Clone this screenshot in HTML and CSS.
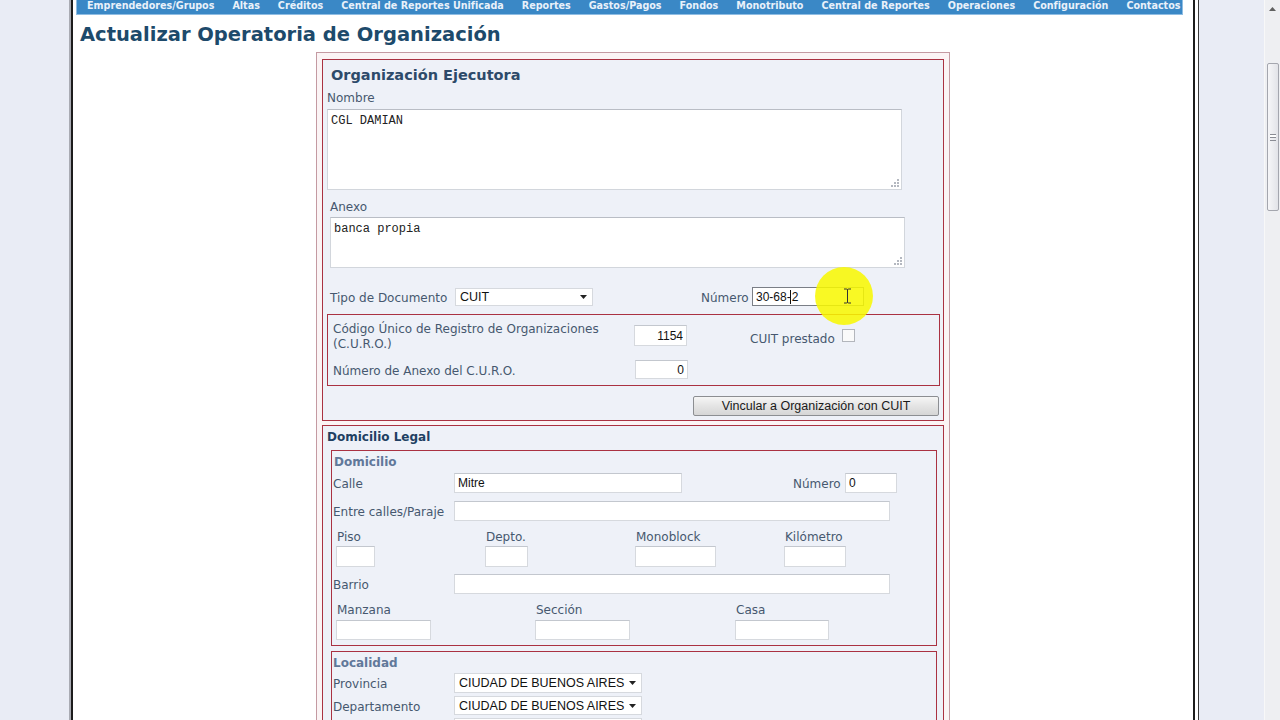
FILE: index.html
```html
<!DOCTYPE html>
<html lang="es">
<head>
<meta charset="utf-8">
<title>Actualizar Operatoria de Organización</title>
<link rel="stylesheet" href="styles.css">
</head>
<body>
<div class="screen">
  <div class="gutter-left"></div>
  <div class="main">
    <nav class="menu">
      <a>Emprendedores/Grupos</a>
      <a>Altas</a>
      <a>Créditos</a>
      <a>Central de Reportes Unificada</a>
      <a>Reportes</a>
      <a>Gastos/Pagos</a>
      <a>Fondos</a>
      <a>Monotributo</a>
      <a>Central de Reportes</a>
      <a>Operaciones</a>
      <a>Configuración</a>
      <a>Contactos</a>
    </nav>
    <h1 class="title">Actualizar Operatoria de Organización</h1>
    <div class="form-outer">
      <section class="box box-org">
        <h2 class="box-title">Organización Ejecutora</h2>
        <div class="lbl lbl-nombre">Nombre</div>
        <textarea class="ta ta-nombre">CGL DAMIAN</textarea>
        <div class="lbl lbl-anexo">Anexo</div>
        <textarea class="ta ta-anexo">banca propia</textarea>
        <div class="row row-doc">
          <span class="lbl w-doc">Tipo de Documento</span>
          <div class="select sel-doc"><span>CUIT</span><svg class="arrow" width="7" height="4" viewBox="0 0 7 4"><path d="M0 0H7L3.5 4Z" fill="#222"/></svg></div>
          <span class="lbl lbl-num">Número</span>
          <div class="input in-cuit">30-68-<span class="caret"></span>2<span class="highlight"></span><svg class="ibeam" width="9" height="16" viewBox="0 0 9 16"><path d="M1 1H3.5Q4.5 1 4.5 2V14Q4.5 15 3.5 15H1M8 1H5.5Q4.5 1 4.5 2M4.5 14Q4.5 15 5.5 15H8" fill="none" stroke="#333" stroke-width="1"/></svg></div>
        </div>
        <div class="box box-curo">
          <div class="row curo-1">
            <span class="lbl curo-lbl">Código Único de Registro de Organizaciones (C.U.R.O.)</span>
            <input class="input in-curo" value="1154">
            <span class="lbl lbl-prestado">CUIT prestado</span>
            <span class="check"></span>
          </div>
          <div class="row curo-2">
            <span class="lbl curo-lbl curo-lbl2">Número de Anexo del C.U.R.O.</span>
            <input class="input in-curo in-curo2" value="0">
          </div>
        </div>
        <div class="btn-row"><button class="btn">Vincular a Organización con CUIT</button></div>
      </section>

      <section class="box box-dom">
        <h3 class="dom-title">Domicilio Legal</h3>
        <div class="box sub-box box-domicilio">
          <h4 class="sub-title">Domicilio</h4>
          <div class="row frow r-calle">
            <span class="lbl flbl">Calle</span>
            <input class="input in-calle" value="Mitre">
            <span class="lbl lbl-numcalle">Número</span>
            <input class="input in-numcalle" value="0">
          </div>
          <div class="row frow r-entre">
            <span class="lbl flbl">Entre calles/Paraje</span>
            <input class="input in-wide">
          </div>
          <div class="grid4">
            <span class="lbl glbl">Piso</span>
            <span class="lbl glbl">Depto.</span>
            <span class="lbl glbl">Monoblock</span>
            <span class="lbl glbl">Kilómetro</span>
            <input class="input gin w-piso">
            <input class="input gin w-depto">
            <input class="input gin w-mono">
            <input class="input gin w-km">
          </div>
          <div class="row frow r-barrio">
            <span class="lbl flbl">Barrio</span>
            <input class="input in-wide">
          </div>
          <div class="grid3">
            <span class="lbl glbl">Manzana</span>
            <span class="lbl glbl">Sección</span>
            <span class="lbl glbl">Casa</span>
            <input class="input gin2 w-manz">
            <input class="input gin2 w-manz">
            <input class="input gin2 w-casa">
          </div>
        </div>
        <div class="box sub-box box-localidad">
          <h4 class="sub-title">Localidad</h4>
          <div class="row lrow r-prov">
            <span class="lbl flbl">Provincia</span>
            <div class="select sel-loc"><span>CIUDAD DE BUENOS AIRES</span><svg class="arrow" width="7" height="4" viewBox="0 0 7 4"><path d="M0 0H7L3.5 4Z" fill="#222"/></svg></div>
          </div>
          <div class="row lrow r-depto">
            <span class="lbl flbl">Departamento</span>
            <div class="select sel-loc sel-loc2"><span>CIUDAD DE BUENOS AIRES</span><svg class="arrow" width="7" height="4" viewBox="0 0 7 4"><path d="M0 0H7L3.5 4Z" fill="#222"/></svg></div>
          </div>
          <div class="row lrow r-loc">
            <span class="lbl flbl"></span>
            <div class="select sel-loc"></div>
          </div>
        </div>
      </section>
    </div>
  </div>
  <div class="gutter-right"></div>
  <div class="scrollbar">
    <div class="sb-up"><svg width="7" height="4" viewBox="0 0 7 4"><path d="M0 4H7L3.5 0Z" fill="#606060"/></svg></div>
    <div class="sb-gap"></div>
    <div class="sb-thumb"><span class="grip"></span></div>
    <div class="sb-track"></div>
  </div>
</div>
</body>
</html>
```

FILE: styles.css
```css
* { box-sizing: border-box; }
html, body { margin: 0; height: 720px; overflow: hidden; }
body {
  font-family: "DejaVu Sans", Verdana, sans-serif;
  font-size: 12px;
  color: #46586f;
  background: #e9ecf5;
}
.screen { display: flex; height: 720px; }
.gutter-left { width: 71px; flex: none; border-right: 2px solid #a9abb3; }
.main {
  width: 1124px; flex: none; height: 720px; overflow: hidden;
  background: #fff;
  border-left: 2px solid #1c1c1c;
  border-right: 2px solid #1c1c1c;
}
.gutter-right { flex: 1; border-left: 1px solid #fff; box-shadow: inset 2px 0 0 #fff, inset 3px 0 0 #3a3a3a; background: #e9ecf5; }
.scrollbar {
  width: 16px; flex: none; display: flex; flex-direction: column;
  background: #eeeff2; border-left: 1px solid #f8f8f8;
}
.sb-up { height: 17px; display: flex; align-items: center; justify-content: center; }
.sb-gap { height: 46px; }
.sb-thumb {
  height: 148px; margin: 0 1px 0 2px;
  border: 1px solid #a4a6ae; border-radius: 2px;
  background: linear-gradient(90deg, #f6f6f8, #e2e3e8);
  display: flex; align-items: center; justify-content: center;
}
.grip { width: 6px; height: 7px; border-top: 1px solid #8a8c94; border-bottom: 1px solid #8a8c94; box-shadow: inset 0 2px 0 #fff, inset 0 3px 0 #8a8c94; }
.sb-track { flex: 1; }

/* menu */
.menu {
  margin-left: 3px; width: 1107px; height: 15px;
  background: #3a88c6;
  border: 1px solid #8fbde3; border-top: 0;
  display: flex; gap: 18px; padding-left: 10px;
  font-family: "DejaVu Sans", Verdana, sans-serif;
  font-weight: bold; font-size: 9.6px; line-height: 11px;
  color: #e9f1fa;
  white-space: nowrap;
}
.menu a { display: block; }

.title {
  margin: 8px 0 0 7px;
  font-size: 19.5px; line-height: 24px; font-weight: bold;
  color: #1d4a6b;
}

.form-outer {
  width: 634px; margin: 5px auto 0;
  border: 1px solid #c49aa2;
  background: #fbf4f5;
  padding: 6px 5px 0;
}
.box {
  border: 1px solid #aa3242;
  background: #eef1f8;
}
.box-org { padding: 0 0 4px; margin-bottom: 4px; }
.box-title {
  margin: 6px 0 0 8px;
  font-size: 14.5px; line-height: 18px; font-weight: bold;
  color: #2d4a6a;
}
.lbl { line-height: 14px; white-space: nowrap; }
.lbl-nombre { margin: 7px 0 0 4px; }
.ta {
  display: block; resize: none;
  font-family: "Liberation Mono", "Courier New", monospace;
  font-size: 12px; line-height: 14px; color: #222;
  border: 1px solid #d2d6dc; border-top-color: #b9bdc5;
  padding: 4px 3px 3px; margin: 0;
  width: 575px;
  background-color: #fff;
  background-image:
    radial-gradient(circle, #b4b8c0 0.9px, transparent 1.1px),
    radial-gradient(circle, #b4b8c0 0.9px, transparent 1.1px),
    radial-gradient(circle, #b4b8c0 0.9px, transparent 1.1px),
    radial-gradient(circle, #b4b8c0 0.9px, transparent 1.1px),
    radial-gradient(circle, #b4b8c0 0.9px, transparent 1.1px),
    radial-gradient(circle, #b4b8c0 0.9px, transparent 1.1px);
  background-size: 2px 2px;
  background-repeat: no-repeat;
  background-position:
    right 2px bottom 2px, right 5px bottom 2px, right 8px bottom 2px,
    right 2px bottom 5px, right 5px bottom 5px, right 2px bottom 8px;
}
.ta-nombre { margin: 4px 0 0 4px; height: 81px; }
.lbl-anexo { margin: 10px 0 0 7px; }
.ta-anexo { margin: 3px 0 0 7px; height: 51px; }

.row { display: flex; align-items: center; }
.row > .lbl { padding-top: 2px; }
.row-doc { margin: 19px 0 0 7px; height: 19px; }
.w-doc { width: 125px; }
.select {
  display: flex; align-items: center; justify-content: space-between;
  background: #fff; border: 1px solid #d6d9de;
  font-family: "Liberation Sans", Arial, sans-serif; font-size: 12.5px; color: #111;
  padding: 0 5px 0 4px;
}
.sel-doc { width: 138px; height: 18px; margin-top: 1px; padding-right: 5px; }
.lbl-num { margin-left: 108px; width: 51px; }
.input {
  font-family: "Liberation Sans", Arial, sans-serif; font-size: 12px; color: #111;
  background: #fff;
  border: 1px solid #d6d9de; border-top-color: #c3c7ce;
  padding: 0 3px; margin: 0; outline: none;
}
.in-cuit {
  position: relative; width: 112px; height: 19px;
  display: flex; align-items: center;
  border-color: #7a7e86;
}
.caret { display: inline-block; width: 1px; height: 14px; background: #111; margin: 0 1px 0 -1px; }
.highlight {
  position: absolute; left: 62px; top: -21px;
  width: 58px; height: 58px; border-radius: 50%;
  background: rgba(248, 248, 0, 0.86);
  z-index: 2;
}
.ibeam { position: absolute; left: 90px; top: 0; z-index: 3; }

.box-curo { margin: 8px 0 0 4px; width: 613px; height: 72px; padding: 0 0 0 5px; }
.curo-1 { margin-top: 7px; align-items: flex-start; }
.curo-lbl { width: 301px; white-space: normal; line-height: 15px; }
.row > .curo-lbl { padding-top: 0; }
.curo-2 { margin-top: 8px; align-items: flex-start; }
.row > .curo-lbl2 { margin-top: 4px; }
.in-curo { width: 53px; height: 21px; text-align: right; margin-top: 3px; }
.in-curo2 { height: 19px; margin: 0 0 0 1px; }
.row > .lbl-prestado { margin: 8px 0 0 63px; }
.check {
  width: 13px; height: 13px; margin: 7px 0 0 7px;
  border: 1px solid #b3b6bc; background: #fafafa;
}
.btn-row { display: flex; justify-content: flex-end; margin: 10px 4px 0 0; }
.btn {
  width: 246px; height: 20px; padding: 0;
  font-family: "Liberation Sans", Arial, sans-serif; font-size: 12.5px; color: #1a1a1a;
  border: 1px solid #8c8e92; border-radius: 2px;
  background: linear-gradient(#f6f6f6, #e4e4e4 50%, #d6d6d6);
}

.dom-title {
  margin: 4px 0 0 4px;
  font-size: 12px; line-height: 14px; font-weight: bold;
  color: #213f62;
}
.sub-box { width: 606px; margin-left: 8px; }
.box-domicilio { margin-top: 6px; padding-bottom: 5px; }
.sub-title {
  margin: 4px 0 0 2px;
  font-size: 12px; line-height: 14px; font-weight: bold;
  color: #61789a;
}
.frow { margin-left: 1px; }
.flbl { width: 121px; }
.r-calle { margin-top: 4px; }
.in-calle { width: 228px; height: 20px; }
.lbl-numcalle { margin-left: 111px; width: 52px; }
.in-numcalle { width: 52px; height: 20px; }
.r-entre { margin-top: 8px; }
.in-wide { width: 436px; height: 20px; }
.grid4 {
  display: grid; grid-template-columns: 149px 150px 149px 1fr;
  row-gap: 2px; margin: 8px 0 0 4px; align-items: start;
}
.glbl { padding-top: 1px; padding-left: 1px; }
.gin { height: 21px; }
.w-piso { width: 39px; }
.w-depto { width: 43px; }
.w-mono { width: 81px; }
.w-km { width: 62px; }
.r-barrio { margin-top: 7px; }
.grid3 {
  display: grid; grid-template-columns: 199px 200px 1fr;
  row-gap: 3px; margin: 8px 0 0 4px; align-items: start;
}
.gin2 { height: 20px; }
.w-manz { width: 95px; }
.w-casa { width: 94px; }

.box-localidad { margin-top: 5px; padding-bottom: 10px; }
.box-localidad .sub-title { margin-left: 1px; }
.lrow { margin-left: 1px; }
.r-prov { margin-top: 3px; }
.r-depto, .r-loc { margin-top: 3px; }
.sel-loc { width: 188px; height: 20px; }
.sel-loc2 { height: 19px; }
.r-loc .flbl { height: 20px; }
```
